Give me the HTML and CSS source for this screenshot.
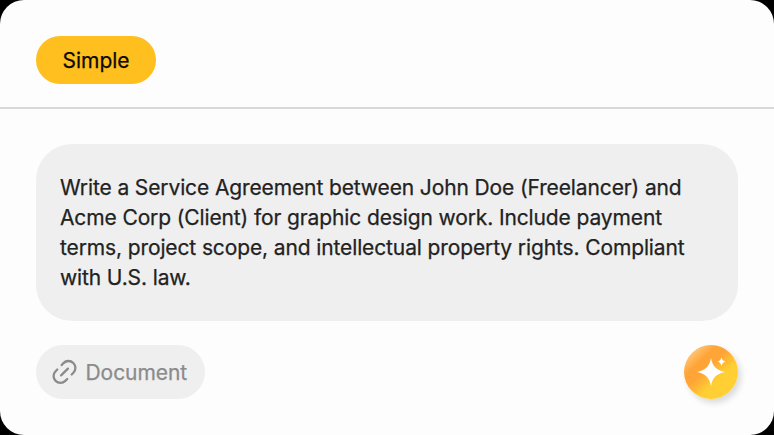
FILE: index.html
```html
<!DOCTYPE html>
<html lang="en">
<head>
<meta charset="utf-8">
<title>Prompt</title>
<link rel="stylesheet" href="styles.css">
</head>
<body>
<main class="card">
  <header class="header"><button class="mode">Simple</button></header>
  <section class="content">
    <p class="prompt">Write a Service Agreement between John Doe (Freelancer) and<br>Acme Corp (Client) for graphic design work. Include payment<br>terms, project scope, and intellectual property rights. Compliant<br>with U.S. law.</p>
    <div class="actions">
      <button class="document">
        <svg class="link-icon" viewBox="0 0 24 24" aria-hidden="true">
          <path d="M9.7 5.1L11.5 3.1A6.6 6.6 0 0 1 21.4 12.8L19.7 14.5M5.3 9.5L3.6 11.2A6.6 6.6 0 0 0 13.3 20.9L15.2 19M9.1 15.4L15.9 8.6"/>
        </svg>
        <span>Document</span>
      </button>
      <button class="generate" aria-label="Generate">
        <svg class="spark-icon" viewBox="0 0 54 54" aria-hidden="true">
          <path d="M27 13C28.6 21.5 32.5 25.4 41 27C32.5 28.6 28.6 32.5 27 41C25.4 32.5 21.5 28.6 13 27C21.5 25.4 25.4 21.5 27 13ZM37.5 12C38.1 15 39.3 16.2 42 16.6C39.3 17.1 38.1 18.3 37.5 21.2C36.9 18.3 35.7 17.1 33 16.6C35.7 16.2 36.9 15 37.5 12Z"/>
        </svg>
      </button>
    </div>
  </section>
</main>
</body>
</html>
```
FILE: styles.css
```css
* { box-sizing: border-box; }
body { margin: 0; background: #000; font-family: Inter, "Liberation Sans", sans-serif; -webkit-text-stroke: .25px currentColor; }
button { border: 0; font-family: inherit; }
.card { height: 435px; overflow: hidden; border-radius: 24px; background: #fdfdfd; }
.header { height: 109px; padding: 36px 36px 0; border-bottom: 2px solid #d8d8d8; }
.mode { width: 120px; height: 48px; padding: 1px 0 0; border-radius: 24px; background: #ffbf1e; color: #0c0a04; font-size: 21px; font-weight: 400; letter-spacing: -.05px; line-height: 47px; }
.content { padding: 35px 36px 0; }
.prompt { height: 177px; margin: 0; padding: 29px 24px; border-radius: 36px; background: #efefef; color: #222; font-size: 21px; font-weight: 400; letter-spacing: -.12px; line-height: 30px; white-space: nowrap; }
.actions { display: flex; justify-content: space-between; margin-top: 24px; }
.document { display: flex; align-items: center; gap: 9.5px; width: 169px; height: 54px; padding: 0 0 0 16px; border-radius: 27px; background: #efefef; color: #8b8b8b; font-size: 21px; font-weight: 400; letter-spacing: -.05px; }
.link-icon { width: 24px; height: 24px; flex: none; overflow: visible; fill: none; stroke: currentColor; stroke-width: 2.3; stroke-linecap: round; stroke-linejoin: round; }
.generate { width: 54px; height: 54px; padding: 0; border-radius: 50%; background: linear-gradient(137deg, #ffc777 13%, #ffa437 30%, #ffa437 43%, #ffce33 63%, #ffd233 100%); box-shadow: 3px 4px 6px rgba(0, 0, 0, .14); }
.spark-icon { display: block; width: 54px; height: 54px; fill: #fff; }
```
